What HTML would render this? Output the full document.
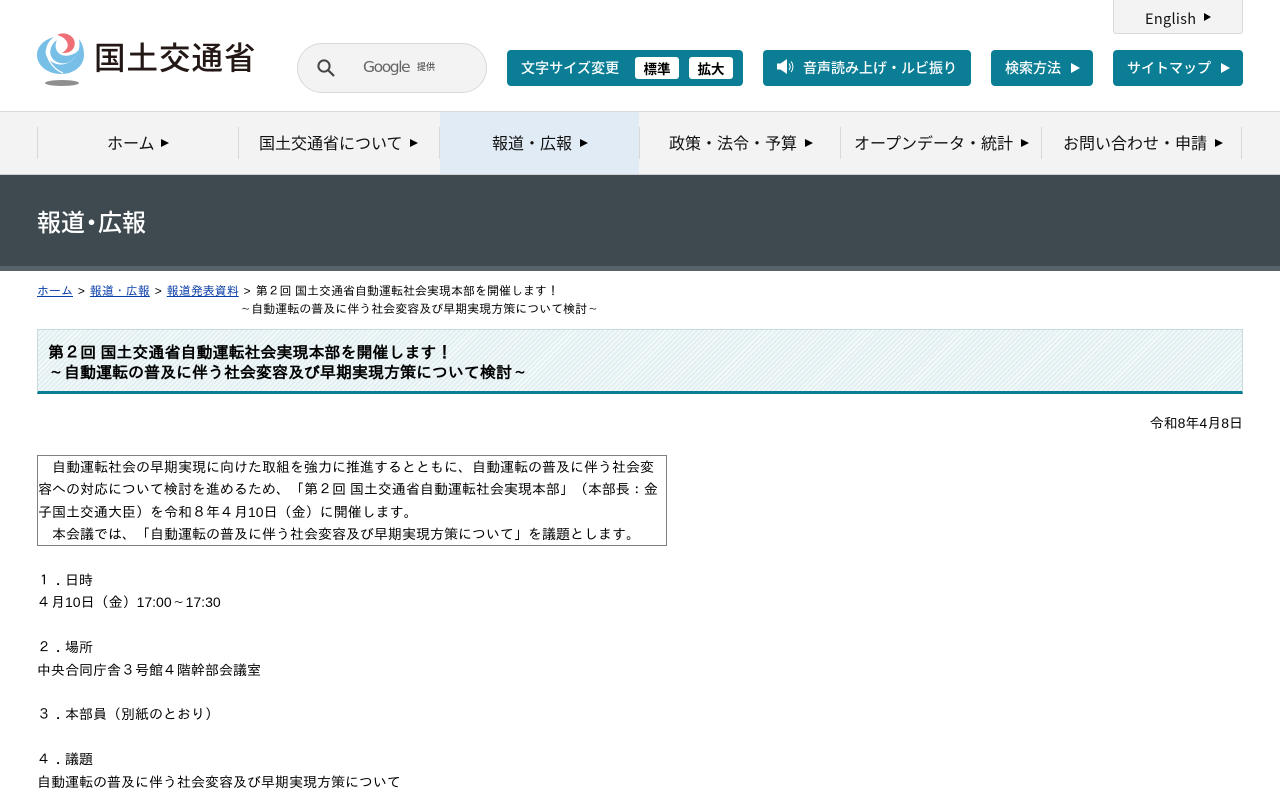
<!DOCTYPE html>
<html lang="ja"><head><meta charset="utf-8"><title>国土交通省</title>
<style>
html,body{margin:0;padding:0;background:#fff;width:1280px;height:800px;overflow:hidden}
body{font-family:"Liberation Sans","IPAGothic",sans-serif;font-size:14px;line-height:22.4px;color:#000;position:relative}
.a{position:absolute;white-space:nowrap}
.n{font-family:"Noto Sans CJK JP",sans-serif}
.btn{position:absolute;top:50px;height:36px;background:#0b7e96;border-radius:4px;color:#fff;font-family:"Noto Sans CJK JP",sans-serif;font-weight:500;font-size:14px;line-height:37px;white-space:nowrap}
.btn span{position:absolute;top:0}
.tri{position:absolute;width:0;height:0;border-style:solid;border-color:transparent}
.tw{border-width:5px 0 5px 9px;border-left-color:#fff;top:13px}
.sep{position:absolute;top:127px;height:32px;width:1px;background:#d8d8d8}
.nv{position:absolute;top:111px;height:64px;line-height:62px;font-family:"Noto Sans CJK JP",sans-serif;font-size:16px;color:#111;white-space:nowrap}
.tb{border-width:4.5px 0 4.5px 8px;border-left-color:#000;top:139px}
.gt{margin:0 1.6px}
.w{font-family:"NanumGothic",sans-serif;line-height:0}
.e{display:inline-block;width:1em;text-align:center}
.d{position:relative;left:5px}
.s{position:absolute;top:7px;width:44px;height:22px;background:#fff;border-radius:3px;color:#000;text-align:center;line-height:23px;font-size:13.5px;font-weight:700}
a{color:#0b3fa8}
</style></head><body>

<svg class="a" style="left:36px;top:32px" width="50" height="56" viewBox="0 0 50 56">
<path fill="#78bfe8" d="M18 5C7 8 1 15 1 23C1 34 12 42 25 42C38 42 48 34 48 23C48 16 46 11 43 7C45 17 41 28 29 32C21 34 13 30 10 23C9 16 12 9 18 5Z"/>
<path fill="none" stroke="#fff" stroke-width="1.3" d="M10 19C12 30 19 38 27 41"/>
<path fill="#78bfe8" d="M21 8C15 12 13 19 15 24C18 31 27 33 33 30C39 27 42 21 43 18C38 23 31 25 26 23C20 21 18 14 21 8Z"/>
<path fill="#ee6f76" d="M21 3C26 0 33 1 37 6C40 10 39 16 35 19C32 21 29 21 26 21C31 18 33 14 31 10C29 6 25 4 21 3Z"/>
<ellipse cx="26" cy="51" rx="17" ry="3" fill="#8f8f8f"/>
</svg>
<div class="a n" style="left:94px;top:33px;font-size:31.5px;line-height:47px;font-weight:500;color:#231815;letter-spacing:1px">国土交通省</div>

<div class="a" style="left:297px;top:43px;width:188px;height:48px;border:1px solid #d9d9d9;border-radius:25px;background:#f3f3f3"></div>
<svg class="a" style="left:316px;top:58px" width="20" height="20" viewBox="0 0 20 20"><circle cx="8" cy="8" r="5.6" fill="none" stroke="#444" stroke-width="2"/><path d="M12 12l6 6" stroke="#444" stroke-width="2.2" fill="none"/></svg>
<div class="a" style="left:363px;top:56px;font-size:15.5px;color:#666;line-height:22px;font-family:'DejaVu Sans',sans-serif;letter-spacing:-1.4px">Google</div>
<div class="a n" style="left:417px;top:57px;font-size:9px;color:#555;line-height:20px;font-weight:500">提供</div>

<div class="a n" style="left:1113px;top:-3px;width:128px;height:35px;background:#f3f3f3;border:1px solid #d9d9d9;border-radius:3px"></div>
<div class="a n" style="left:1145px;top:8px;font-size:14.5px;line-height:22px;color:#111;letter-spacing:.3px">English</div>
<div class="tri" style="left:1204px;top:13px;border-width:4.5px 0 4.5px 7px;border-left-color:#000"></div>

<div class="btn" style="left:507px;width:236px"><span style="left:14px;letter-spacing:.1px">文字サイズ変更</span>
<div class="s" style="left:128px">標準</div>
<div class="s" style="left:182px">拡大</div></div>

<div class="btn" style="left:763px;width:208px">
<svg style="position:absolute;left:13px;top:8px" width="20" height="18" viewBox="0 0 20 18"><path fill="#fff" d="M1 5.5h3.5L11 1v15L4.5 11.5H1z"/><path d="M13 5.5c1.500 2 1.500 4.500 0 6.500M15 3.500c2.500 3 2.500 7.500 0 10.500" fill="none" stroke="#fff" stroke-width="1"/></svg>
<span style="left:40px">音声読み上げ・ルビ振り</span></div>

<div class="btn" style="left:991px;width:102px"><span style="left:14px">検索方法</span><div class="tri tw" style="left:80px"></div></div>
<div class="btn" style="left:1113px;width:130px"><span style="left:14px">サイトマップ</span><div class="tri tw" style="left:108px"></div></div>

<div class="a" style="left:0;top:111px;width:1280px;height:64px;background:#f3f3f3;border-top:1px solid #d9d9d9;box-sizing:border-box"></div>
<div class="a" style="left:440px;top:112px;width:199px;height:63px;background:#e0ebf5"></div>
<div class="a" style="left:0;top:174px;width:1280px;height:1px;background:#d0d0d0"></div>
<div class="sep" style="left:37px"></div><div class="sep" style="left:238px"></div><div class="sep" style="left:439px"></div><div class="sep" style="left:639px"></div><div class="sep" style="left:840px"></div><div class="sep" style="left:1041px"></div><div class="sep" style="left:1241px"></div>

<div class="nv" style="left:107px">ホーム</div><div class="tri tb" style="left:161px"></div>
<div class="nv" style="left:259px">国土交通省について</div><div class="tri tb" style="left:410px"></div>
<div class="nv" style="left:492px">報道・広報</div><div class="tri tb" style="left:580px"></div>
<div class="nv" style="left:669px">政策・法令・予算</div><div class="tri tb" style="left:805px"></div>
<div class="nv" style="left:854px">オープンデータ・統計</div><div class="tri tb" style="left:1021px"></div>
<div class="nv" style="left:1063px">お問い合わせ・申請</div><div class="tri tb" style="left:1215px"></div>

<div class="a" style="left:0;top:175px;width:1280px;height:91px;background:#3e4a50"></div>
<div class="a" style="left:0;top:266px;width:1280px;height:5px;background:#566369"></div>
<div class="a n" style="left:37px;top:203px;font-size:24px;line-height:36px;color:#fff;font-weight:500"><span>報道</span><span style="margin:0 -5.5px">・</span><span>広報</span></div>

<div class="a" style="left:37px;top:282px;font-size:12px;line-height:19px">
<a href="#">ホーム</a><span class="gt"> &gt; </span><a href="#">報道・広報</a><span class="gt"> &gt; </span><a href="#">報道発表資料</a><span class="gt"> &gt; </span>第２回 国土交通省自動運転社会実現本部を開催します！</div>
<div class="a" style="left:240px;top:300px;font-size:12px;line-height:19px"><span class="w">～</span>自動運転の普及に伴う社会変容及び早期実現方策について検討<span class="w">～</span></div>

<div class="a" style="left:37px;top:329px;width:1206px;height:65px;box-sizing:border-box;border:1px solid #c5dbe0;border-bottom:3px solid #0b7e96;background:repeating-linear-gradient(135deg,#e2eff2 0,#e2eff2 2px,#f4f9fa 2px,#f4f9fa 3.5px)"></div>
<div class="a" style="left:48px;top:344px;font-size:16px;line-height:20px;font-weight:bold">第２回 国土交通省自動運転社会実現本部を開催します！<br><span class="w e">～</span>自動運転の普及に伴う社会変容及び早期実現方策について検討<span class="w e">～</span></div>

<div class="a" style="right:37px;top:412px">令和8年4月8日</div>

<div class="a" style="left:37px;top:455px;width:630px;height:91px;box-sizing:border-box;border:1px solid #808080"></div>
<div class="a" style="left:38px;top:456px">　自動運転社会の早期実現に向けた取組を強力に推進するとともに、自動運転の普及に伴う社会変<br>容への対応について検討を進めるため、「第２回 国土交通省自動運転社会実現本部」（本部長：金<br>子国土交通大臣）を令和８年４月10日（金）に開催します。<br>　本会議では、「自動運転の普及に伴う社会変容及び早期実現方策について」を議題とします。</div>

<div class="a" style="left:37px;top:569px">１<span class="d">．</span>日時<br>４月10日（金）17:00<span class="w e">～</span>17:30<br><br>２<span class="d">．</span>場所<br>中央合同庁舎３号館４階幹部会議室<br><br>３<span class="d">．</span>本部員（別紙のとおり）<br><br>４<span class="d">．</span>議題<br>自動運転の普及に伴う社会変容及び早期実現方策について</div>

</body></html>
